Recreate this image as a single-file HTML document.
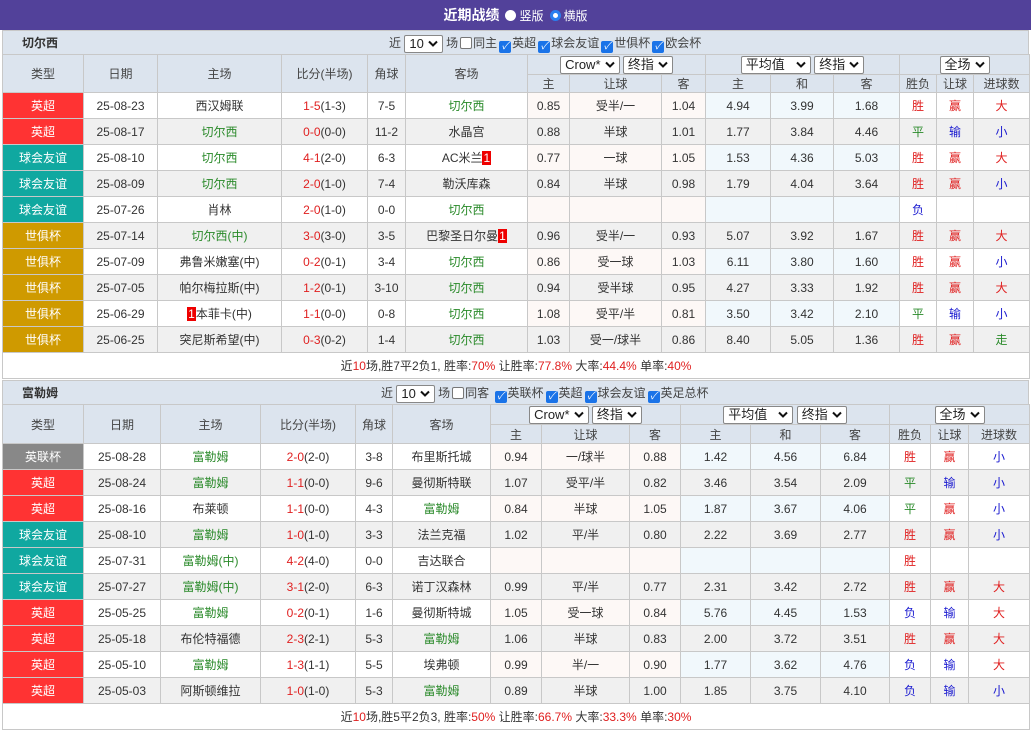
<!DOCTYPE html>
<html><head><meta charset="utf-8"><style>
*{margin:0;padding:0;box-sizing:border-box}
body{width:1031px;height:733px;background:#fff;font-family:"Liberation Sans","Noto Sans CJK SC",sans-serif;font-size:12px;color:#333;overflow:hidden;position:relative}
.top{position:absolute;left:0;top:0;width:1031px;height:30px;background:#52419a;color:#fff;font-weight:bold;font-size:14px;text-align:center;line-height:30px}
.top .r{display:inline-block;width:11px;height:11px;border-radius:50%;background:#fff;vertical-align:-1px;margin:0 3px 0 6px}
.top .r2{background:#fff;border:3px solid #2a7ff0;box-sizing:border-box}
.top span{font-weight:normal;font-size:12px}
.bar{position:absolute;left:2px;width:1027px;background:#dce4ee;height:24px;line-height:24px;border:1px solid #c8c8c8;border-bottom:none}
.bar b{position:absolute;left:19px;font-size:12px}
.bar .c{position:absolute;white-space:nowrap;color:#444}
.sel{display:inline-block;border:1px solid #888;background:#fff;height:18px;line-height:16px;padding:0 4px;vertical-align:middle;border-radius:2px;font-size:13px;color:#222}
.sel svg{vertical-align:1px;margin-left:4px}
.cb{display:inline-block;width:12px;height:12px;border:1px solid #777;border-radius:2px;background:#fff;vertical-align:-2px;margin:0 1px 0 2px}
.ck{background:#1a73e8;border-color:#1a73e8;color:#fff;font-size:10px;line-height:10px;text-align:center}
table{position:absolute;left:2px;border-collapse:collapse;table-layout:fixed;width:1027px}
td{border:1px solid #c8c8c8;text-align:center;height:26px;white-space:nowrap;overflow:hidden;padding:0}
.h td{background:#dce4ee;height:20px;color:#444}
.h2 td{height:18px}
.t2 .h2 td{height:19px}
tr.e td{background:#f0f0f0}
tr.o td.a{background:#fdf8f6}
tr.o td.u{background:#f1f8fc}
td.y{color:#fff;background:#f33!important}
td.f{color:#fff;background:#10a8a0!important}
td.w{color:#fff;background:#cf9a00!important}
td.g{color:#fff;background:#888!important}
.G{color:#2a8a2a}.R{color:#e02020}.B{color:#1a1ad0}
.rc{background:#e00;color:#fff;padding:0 1px}
.sum td{height:26px;background:#fff}
</style></head><body>
<div class="top">近期战绩<i class="r"></i><span>竖版</span><i class="r r2"></i><span>横版</span></div>

<div class="bar" style="top:30px"><b>切尔西</b><span class="c" style="left:386px">近 <span class="sel">10<svg width="10" height="7" viewBox="0 0 10 7"><path d="M1 1.5L5 5.5L9 1.5" fill="none" stroke="#111" stroke-width="2"/></svg></span> 场<i class="cb"></i>同主<i class="cb ck">✓</i>英超<i class="cb ck">✓</i>球会友谊<i class="cb ck">✓</i>世俱杯<i class="cb ck">✓</i>欧会杯</span></div>
<table style="top:54px">
<colgroup><col width="81"><col width="74"><col width="124"><col width="86"><col width="38"><col width="122"><col width="42"><col width="92"><col width="44"><col width="65"><col width="63"><col width="66"><col width="37"><col width="37"><col width="56"></colgroup>
<tr class="h"><td rowspan="2">类型</td><td rowspan="2">日期</td><td rowspan="2">主场</td><td rowspan="2">比分(半场)</td><td rowspan="2">角球</td><td rowspan="2">客场</td><td colspan="3"><span class="sel">Crow*<svg width="10" height="7" viewBox="0 0 10 7"><path d="M1 1.5L5 5.5L9 1.5" fill="none" stroke="#111" stroke-width="2"/></svg></span> <span class="sel">终指<svg width="10" height="7" viewBox="0 0 10 7"><path d="M1 1.5L5 5.5L9 1.5" fill="none" stroke="#111" stroke-width="2"/></svg></span></td><td colspan="3"><span class="sel">平均值 &nbsp;<svg width="10" height="7" viewBox="0 0 10 7"><path d="M1 1.5L5 5.5L9 1.5" fill="none" stroke="#111" stroke-width="2"/></svg></span> <span class="sel">终指<svg width="10" height="7" viewBox="0 0 10 7"><path d="M1 1.5L5 5.5L9 1.5" fill="none" stroke="#111" stroke-width="2"/></svg></span></td><td colspan="3"><span class="sel">全场<svg width="10" height="7" viewBox="0 0 10 7"><path d="M1 1.5L5 5.5L9 1.5" fill="none" stroke="#111" stroke-width="2"/></svg></span></td></tr>
<tr class="h h2"><td>主</td><td>让球</td><td>客</td><td>主</td><td>和</td><td>客</td><td>胜负</td><td>让球</td><td>进球数</td></tr>
<tr class="o"><td class="y">英超</td><td>25-08-23</td><td>西汉姆联</td><td><span class="R">1-5</span>(1-3)</td><td>7-5</td><td class="G">切尔西</td><td class="a">0.85</td><td class="a">受半/一</td><td class="a">1.04</td><td class="u">4.94</td><td class="u">3.99</td><td class="u">1.68</td><td class="R">胜</td><td class="R">赢</td><td class="R">大</td></tr>
<tr class="e"><td class="y">英超</td><td>25-08-17</td><td class="G">切尔西</td><td><span class="R">0-0</span>(0-0)</td><td>11-2</td><td>水晶宫</td><td>0.88</td><td>半球</td><td>1.01</td><td>1.77</td><td>3.84</td><td>4.46</td><td class="G">平</td><td class="B">输</td><td class="B">小</td></tr>
<tr class="o"><td class="f">球会友谊</td><td>25-08-10</td><td class="G">切尔西</td><td><span class="R">4-1</span>(2-0)</td><td>6-3</td><td>AC米兰<span class="rc">1</span></td><td class="a">0.77</td><td class="a">一球</td><td class="a">1.05</td><td class="u">1.53</td><td class="u">4.36</td><td class="u">5.03</td><td class="R">胜</td><td class="R">赢</td><td class="R">大</td></tr>
<tr class="e"><td class="f">球会友谊</td><td>25-08-09</td><td class="G">切尔西</td><td><span class="R">2-0</span>(1-0)</td><td>7-4</td><td>勒沃库森</td><td>0.84</td><td>半球</td><td>0.98</td><td>1.79</td><td>4.04</td><td>3.64</td><td class="R">胜</td><td class="R">赢</td><td class="B">小</td></tr>
<tr class="o"><td class="f">球会友谊</td><td>25-07-26</td><td>肖林</td><td><span class="R">2-0</span>(1-0)</td><td>0-0</td><td class="G">切尔西</td><td class="a"></td><td class="a"></td><td class="a"></td><td class="u"></td><td class="u"></td><td class="u"></td><td class="B">负</td><td></td><td></td></tr>
<tr class="e"><td class="w">世俱杯</td><td>25-07-14</td><td class="G">切尔西(中)</td><td><span class="R">3-0</span>(3-0)</td><td>3-5</td><td>巴黎圣日尔曼<span class="rc">1</span></td><td>0.96</td><td>受半/一</td><td>0.93</td><td>5.07</td><td>3.92</td><td>1.67</td><td class="R">胜</td><td class="R">赢</td><td class="R">大</td></tr>
<tr class="o"><td class="w">世俱杯</td><td>25-07-09</td><td>弗鲁米嫩塞(中)</td><td><span class="R">0-2</span>(0-1)</td><td>3-4</td><td class="G">切尔西</td><td class="a">0.86</td><td class="a">受一球</td><td class="a">1.03</td><td class="u">6.11</td><td class="u">3.80</td><td class="u">1.60</td><td class="R">胜</td><td class="R">赢</td><td class="B">小</td></tr>
<tr class="e"><td class="w">世俱杯</td><td>25-07-05</td><td>帕尔梅拉斯(中)</td><td><span class="R">1-2</span>(0-1)</td><td>3-10</td><td class="G">切尔西</td><td>0.94</td><td>受半球</td><td>0.95</td><td>4.27</td><td>3.33</td><td>1.92</td><td class="R">胜</td><td class="R">赢</td><td class="R">大</td></tr>
<tr class="o"><td class="w">世俱杯</td><td>25-06-29</td><td><span class="rc">1</span>本菲卡(中)</td><td><span class="R">1-1</span>(0-0)</td><td>0-8</td><td class="G">切尔西</td><td class="a">1.08</td><td class="a">受平/半</td><td class="a">0.81</td><td class="u">3.50</td><td class="u">3.42</td><td class="u">2.10</td><td class="G">平</td><td class="B">输</td><td class="B">小</td></tr>
<tr class="e"><td class="w">世俱杯</td><td>25-06-25</td><td>突尼斯希望(中)</td><td><span class="R">0-3</span>(0-2)</td><td>1-4</td><td class="G">切尔西</td><td>1.03</td><td>受一/球半</td><td>0.86</td><td>8.40</td><td>5.05</td><td>1.36</td><td class="R">胜</td><td class="R">赢</td><td class="G">走</td></tr>
<tr class="sum"><td colspan="15">近<span class="R">10</span>场,胜7平2负1, 胜率:<span class="R">70%</span> 让胜率:<span class="R">77.8%</span> 大率:<span class="R">44.4%</span> 单率:<span class="R">40%</span></td></tr>
</table>

<div class="bar" style="top:380px;height:24px;line-height:24px"><b>富勒姆</b><span class="c" style="left:378px">近 <span class="sel">10<svg width="10" height="7" viewBox="0 0 10 7"><path d="M1 1.5L5 5.5L9 1.5" fill="none" stroke="#111" stroke-width="2"/></svg></span> 场<i class="cb"></i>同客 <i class="cb ck">✓</i>英联杯<i class="cb ck">✓</i>英超<i class="cb ck">✓</i>球会友谊<i class="cb ck">✓</i>英足总杯</span></div>
<table class="t2" style="top:404px">
<colgroup><col width="81"><col width="77"><col width="100"><col width="95"><col width="37"><col width="98"><col width="51"><col width="88"><col width="51"><col width="70"><col width="70"><col width="69"><col width="41"><col width="38"><col width="61"></colgroup>
<tr class="h"><td rowspan="2">类型</td><td rowspan="2">日期</td><td rowspan="2">主场</td><td rowspan="2">比分(半场)</td><td rowspan="2">角球</td><td rowspan="2">客场</td><td colspan="3"><span class="sel">Crow*<svg width="10" height="7" viewBox="0 0 10 7"><path d="M1 1.5L5 5.5L9 1.5" fill="none" stroke="#111" stroke-width="2"/></svg></span> <span class="sel">终指<svg width="10" height="7" viewBox="0 0 10 7"><path d="M1 1.5L5 5.5L9 1.5" fill="none" stroke="#111" stroke-width="2"/></svg></span></td><td colspan="3"><span class="sel">平均值 &nbsp;<svg width="10" height="7" viewBox="0 0 10 7"><path d="M1 1.5L5 5.5L9 1.5" fill="none" stroke="#111" stroke-width="2"/></svg></span> <span class="sel">终指<svg width="10" height="7" viewBox="0 0 10 7"><path d="M1 1.5L5 5.5L9 1.5" fill="none" stroke="#111" stroke-width="2"/></svg></span></td><td colspan="3"><span class="sel">全场<svg width="10" height="7" viewBox="0 0 10 7"><path d="M1 1.5L5 5.5L9 1.5" fill="none" stroke="#111" stroke-width="2"/></svg></span></td></tr>
<tr class="h h2"><td>主</td><td>让球</td><td>客</td><td>主</td><td>和</td><td>客</td><td>胜负</td><td>让球</td><td>进球数</td></tr>
<tr class="o"><td class="g">英联杯</td><td>25-08-28</td><td class="G">富勒姆</td><td><span class="R">2-0</span>(2-0)</td><td>3-8</td><td>布里斯托城</td><td class="a">0.94</td><td class="a">一/球半</td><td class="a">0.88</td><td class="u">1.42</td><td class="u">4.56</td><td class="u">6.84</td><td class="R">胜</td><td class="R">赢</td><td class="B">小</td></tr>
<tr class="e"><td class="y">英超</td><td>25-08-24</td><td class="G">富勒姆</td><td><span class="R">1-1</span>(0-0)</td><td>9-6</td><td>曼彻斯特联</td><td>1.07</td><td>受平/半</td><td>0.82</td><td>3.46</td><td>3.54</td><td>2.09</td><td class="G">平</td><td class="B">输</td><td class="B">小</td></tr>
<tr class="o"><td class="y">英超</td><td>25-08-16</td><td>布莱顿</td><td><span class="R">1-1</span>(0-0)</td><td>4-3</td><td class="G">富勒姆</td><td class="a">0.84</td><td class="a">半球</td><td class="a">1.05</td><td class="u">1.87</td><td class="u">3.67</td><td class="u">4.06</td><td class="G">平</td><td class="R">赢</td><td class="B">小</td></tr>
<tr class="e"><td class="f">球会友谊</td><td>25-08-10</td><td class="G">富勒姆</td><td><span class="R">1-0</span>(1-0)</td><td>3-3</td><td>法兰克福</td><td>1.02</td><td>平/半</td><td>0.80</td><td>2.22</td><td>3.69</td><td>2.77</td><td class="R">胜</td><td class="R">赢</td><td class="B">小</td></tr>
<tr class="o"><td class="f">球会友谊</td><td>25-07-31</td><td class="G">富勒姆(中)</td><td><span class="R">4-2</span>(4-0)</td><td>0-0</td><td>吉达联合</td><td class="a"></td><td class="a"></td><td class="a"></td><td class="u"></td><td class="u"></td><td class="u"></td><td class="R">胜</td><td></td><td></td></tr>
<tr class="e"><td class="f">球会友谊</td><td>25-07-27</td><td class="G">富勒姆(中)</td><td><span class="R">3-1</span>(2-0)</td><td>6-3</td><td>诺丁汉森林</td><td>0.99</td><td>平/半</td><td>0.77</td><td>2.31</td><td>3.42</td><td>2.72</td><td class="R">胜</td><td class="R">赢</td><td class="R">大</td></tr>
<tr class="o"><td class="y">英超</td><td>25-05-25</td><td class="G">富勒姆</td><td><span class="R">0-2</span>(0-1)</td><td>1-6</td><td>曼彻斯特城</td><td class="a">1.05</td><td class="a">受一球</td><td class="a">0.84</td><td class="u">5.76</td><td class="u">4.45</td><td class="u">1.53</td><td class="B">负</td><td class="B">输</td><td class="R">大</td></tr>
<tr class="e"><td class="y">英超</td><td>25-05-18</td><td>布伦特福德</td><td><span class="R">2-3</span>(2-1)</td><td>5-3</td><td class="G">富勒姆</td><td>1.06</td><td>半球</td><td>0.83</td><td>2.00</td><td>3.72</td><td>3.51</td><td class="R">胜</td><td class="R">赢</td><td class="R">大</td></tr>
<tr class="o"><td class="y">英超</td><td>25-05-10</td><td class="G">富勒姆</td><td><span class="R">1-3</span>(1-1)</td><td>5-5</td><td>埃弗顿</td><td class="a">0.99</td><td class="a">半/一</td><td class="a">0.90</td><td class="u">1.77</td><td class="u">3.62</td><td class="u">4.76</td><td class="B">负</td><td class="B">输</td><td class="R">大</td></tr>
<tr class="e"><td class="y">英超</td><td>25-05-03</td><td>阿斯顿维拉</td><td><span class="R">1-0</span>(1-0)</td><td>5-3</td><td class="G">富勒姆</td><td>0.89</td><td>半球</td><td>1.00</td><td>1.85</td><td>3.75</td><td>4.10</td><td class="B">负</td><td class="B">输</td><td class="B">小</td></tr>
<tr class="sum"><td colspan="15">近<span class="R">10</span>场,胜5平2负3, 胜率:<span class="R">50%</span> 让胜率:<span class="R">66.7%</span> 大率:<span class="R">33.3%</span> 单率:<span class="R">30%</span></td></tr>
</table>
</body></html>
